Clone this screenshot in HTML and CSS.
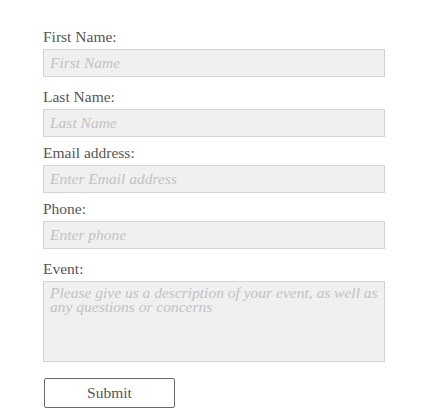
FILE: index.html
```html
<!DOCTYPE html>
<html lang="en">
<head>
<meta charset="utf-8">
<title>Contact form</title>
<link rel="stylesheet" href="styles.css">
</head>
<body>
<form class="form">
  <div class="field field--loose">
    <label class="label" for="first">First Name:</label>
    <input class="input" id="first" type="text" placeholder="First Name">
  </div>
  <div class="field">
    <label class="label" for="last">Last Name:</label>
    <input class="input" id="last" type="text" placeholder="Last Name">
  </div>
  <div class="field">
    <label class="label" for="email">Email address:</label>
    <input class="input" id="email" type="email" placeholder="Enter Email address">
  </div>
  <div class="field field--loose">
    <label class="label" for="phone">Phone:</label>
    <input class="input" id="phone" type="tel" placeholder="Enter phone">
  </div>
  <div class="field field--last">
    <label class="label" for="event">Event:</label>
    <textarea class="input textarea" id="event" placeholder="Please give us a description of your event, as well as&#10;any questions or concerns"></textarea>
  </div>
  <button class="button" type="submit">Submit</button>
</form>
</body>
</html>
```

FILE: styles.css
```css
html, body {
  margin: 0;
  padding: 0;
  background: #ffffff;
}

body {
  font-family: "Liberation Serif", "Times New Roman", serif;
  font-size: 15.5px;
  color: #555555;
}

.form {
  display: flex;
  flex-direction: column;
  align-items: flex-start;
  padding: 28px 0 0 43px;
}

.field {
  display: flex;
  flex-direction: column;
  margin-bottom: 7px;
}

.field--loose {
  margin-bottom: 11px;
}

.field--last {
  margin-bottom: 16px;
}

.label {
  display: block;
  line-height: 18px;
  margin-bottom: 3px;
  color: #555555;
}

.input {
  box-sizing: border-box;
  width: 342px;
  height: 28px;
  margin: 0;
  padding: 0 6px;
  border: 1px solid #d3d3d3;
  border-radius: 0;
  background: #f0f0f0;
  font-family: "Liberation Serif", "Times New Roman", serif;
  font-size: 15.5px;
  color: #555555;
  outline: none;
}

.input::placeholder {
  color: #c2c2c2;
  font-style: italic;
  opacity: 1;
}

.textarea {
  height: 81px;
  padding: 4px 6px;
  line-height: 14px;
  resize: none;
  display: block;
}

.button {
  box-sizing: border-box;
  width: 131px;
  height: 30px;
  margin-left: 1px;
  padding: 0;
  border: 1px solid #6a6a6a;
  border-radius: 2px;
  background: #ffffff;
  font-family: "Liberation Serif", "Times New Roman", serif;
  font-size: 15.5px;
  color: #555555;
  cursor: pointer;
}
```
